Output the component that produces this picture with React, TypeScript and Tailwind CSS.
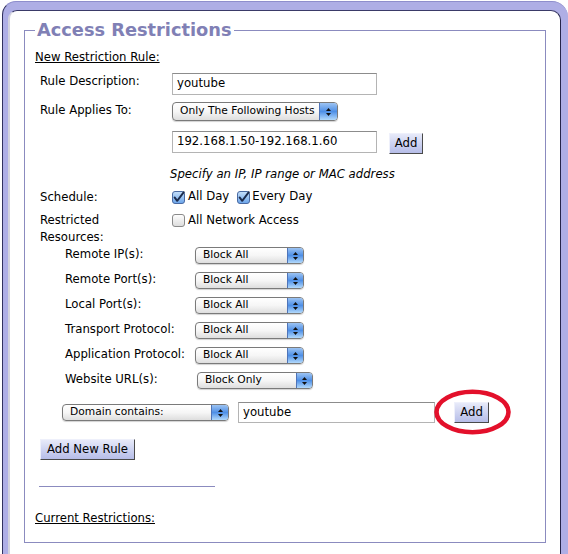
import React from "react";

function Arrows() {
  return (
    <svg width="7" height="10" viewBox="0 0 7 10">
      <polygon points="1,4 3.5,1 6,4" fill="#111" />
      <polygon points="1,6 3.5,9 6,6" fill="#111" />
    </svg>
  );
}

function AquaSelect({ text, cls, arrowCls }: { text: string; cls: string; arrowCls: string }) {
  return (
    <div
      className={`flex items-stretch rounded-[4px] border border-[#7a7a7a] bg-linear-to-b from-white via-[#f6f6f6] to-[#dedede] shadow-[0_1px_1px_rgba(0,0,0,0.18)] overflow-hidden ${cls}`}
    >
      <div className="flex-1 flex items-center pl-[7px] text-[10.7px] leading-none text-black whitespace-nowrap">{text}</div>
      <div
        className={`flex items-center justify-center border-l border-[#4f74b8] bg-linear-to-b from-[#9cc3f2] via-[#4e8fe6] to-[#b2d9fb] ${arrowCls}`}
      >
        <Arrows />
      </div>
    </div>
  );
}

function TextInput({ value, cls }: { value: string; cls: string }) {
  return (
    <div
      className={`flex items-center border border-[#b4b4b4] border-t-[#8c8c8c] bg-white pl-[4px] text-[11.7px] leading-none whitespace-nowrap ${cls}`}
    >
      {value}
    </div>
  );
}

function Btn({ text, cls }: { text: string; cls: string }) {
  return (
    <div
      className={`flex items-center justify-center border border-t-[#eef0fb] border-l-[#eef0fb] border-r-[#4a4a4a] border-b-[#4a4a4a] bg-linear-to-b from-[#e7eaf9] to-[#b6bde8] text-[11.7px] leading-none text-black whitespace-nowrap ${cls}`}
    >
      {text}
    </div>
  );
}

function Check({ checked, id }: { checked: boolean; id: string }) {
  return (
    <svg width="13" height="13" viewBox="0 0 13 13" className="shrink-0 overflow-visible">
      <defs>
        <linearGradient id={id} x1="0" y1="0" x2="0" y2="1">
          {checked ? (
            <>
              <stop offset="0" stopColor="#c6e0fa" />
              <stop offset="1" stopColor="#6aa4ea" />
            </>
          ) : (
            <>
              <stop offset="0" stopColor="#ffffff" />
              <stop offset="1" stopColor="#dcdcdc" />
            </>
          )}
        </linearGradient>
      </defs>
      <rect x="0.5" y="0.5" width="12" height="12" rx="2.5" fill={`url(#${id})`} stroke={checked ? "#4a6aa2" : "#8a8a8a"} />
      {checked && <path d="M2.6 6.4 L5.2 9.8 L11.8 1.2" fill="none" stroke="#1c2b4c" strokeWidth="1.9" strokeLinecap="round" strokeLinejoin="round" />}
    </svg>
  );
}

function SubRow({ label, children }: { label: string; children: React.ReactNode }) {
  return (
    <div className="flex items-start h-[17px] mt-[8px] first:mt-[1px]">
      <div className="w-[130px] shrink-0 mt-[-1px] leading-[16px] whitespace-nowrap">{label}</div>
      {children}
    </div>
  );
}

export default function App() {
  return (
    <div className="w-[568px] h-[554px] overflow-hidden bg-white pl-[2px] pt-[1px] font-['DejaVu_Sans',sans-serif] text-[11.7px] text-black">
      <div className="w-[566px] min-h-[600px] rounded-tl-[14px] rounded-tr-[16px] border-l border-t border-l-[#30305e] border-t-[#8e8ecc] bg-[#aeaee5] pl-[5px] pt-[8px] pr-[7px]">
        <div className="min-h-[600px] rounded-tl-[9px] rounded-tr-[10px] bg-white border-l-2 border-t border-r border-l-[#d2d2de] border-t-[#3a3a68] border-r-[#24244a] pl-[14px] pr-[14px] pt-[7px]">
          <fieldset className="border border-[#8b8bbf] pl-[10px] pb-[16px]">
            <legend className="px-[2px] text-[17.8px] leading-[24px] font-bold text-[#8080b5]">Access Restrictions</legend>

            <div className="mt-[7px] leading-[16px] underline">New Restriction Rule:</div>

            <div className="pl-[5px]">
              <div className="mt-[8px] flex items-start">
                <div className="w-[118px] mr-[14px] leading-[16px]">Rule Description:</div>
                <TextInput value="youtube" cls="w-[205px] h-[22px]" />
              </div>

              <div className="mt-[7px] flex items-start">
                <div className="w-[118px] mr-[14px] leading-[16px]">Rule Applies To:</div>
                <AquaSelect text="Only The Following Hosts" cls="w-[166px] h-[19px]" arrowCls="w-[18px]" />
              </div>

              <div className="mt-[10px] flex items-start pl-[132px]">
                <TextInput value="192.168.1.50-192.168.1.60" cls="w-[205px] h-[22px]" />
                <Btn text="Add" cls="ml-[12px] mt-[2px] w-[34px] h-[21px]" />
              </div>

              <div className="mt-[12px] pl-[130px] leading-[16px] italic">Specify an IP, IP range or MAC address</div>

              <div className="mt-[7px] flex items-center h-[16px]">
                <div className="w-[118px] mr-[14px] leading-[16px]">Schedule:</div>
                <div className="flex items-center">
                  <Check checked id="cb1" />
                  <span className="ml-[3px]">All Day</span>
                  <span className="ml-[8px] flex items-center">
                    <Check checked id="cb2" />
                    <span className="ml-[2px]">Every Day</span>
                  </span>
                </div>
              </div>

              <div className="mt-[7px] flex items-start">
                <div className="w-[118px] mr-[14px] leading-[17px]">Restricted Resources:</div>
                <div className="flex items-center h-[17px]">
                  <Check checked={false} id="cb3" />
                  <span className="ml-[3px]">All Network Access</span>
                </div>
              </div>

              <div className="pl-[25px] flex flex-col">
                <SubRow label="Remote IP(s):">
                  <AquaSelect text="Block All" cls="w-[109px] h-[17px]" arrowCls="w-[16px]" />
                </SubRow>
                <SubRow label="Remote Port(s):">
                  <AquaSelect text="Block All" cls="w-[109px] h-[17px]" arrowCls="w-[16px]" />
                </SubRow>
                <SubRow label="Local Port(s):">
                  <AquaSelect text="Block All" cls="w-[109px] h-[17px]" arrowCls="w-[16px]" />
                </SubRow>
                <SubRow label="Transport Protocol:">
                  <AquaSelect text="Block All" cls="w-[109px] h-[17px]" arrowCls="w-[16px]" />
                </SubRow>
                <SubRow label="Application Protocol:">
                  <AquaSelect text="Block All" cls="w-[109px] h-[17px]" arrowCls="w-[16px]" />
                </SubRow>
                <SubRow label="Website URL(s):">
                  <AquaSelect text="Block Only" cls="ml-[2px] w-[116px] h-[17px]" arrowCls="w-[16px]" />
                </SubRow>
              </div>
            </div>

            <div className="mt-[13px] ml-[27px] flex items-center h-[21px]">
              <AquaSelect text="Domain contains:" cls="w-[167px] h-[17px]" arrowCls="w-[17px]" />
              <TextInput value="youtube" cls="ml-[9px] w-[197px] h-[21px]" />
              <div className="relative ml-[19px]">
                <Btn text="Add" cls="w-[35px] h-[21px]" />
                <svg
                  className="absolute left-[-20px] top-[-13px] pointer-events-none overflow-visible"
                  width="77"
                  height="46"
                  viewBox="0 0 77 46"
                >
                  <ellipse cx="38.5" cy="23" rx="36" ry="20.3" fill="none" stroke="#e3102b" strokeWidth="4.6" />
                </svg>
              </div>
            </div>

            <Btn text="Add New Rule" cls="mt-[16px] ml-[5px] w-[95px] h-[21px]" />

            <div className="mt-[26px] ml-[4px] w-[176px] h-px bg-[#8b8bbf]" />

            <div className="mt-[23px] leading-[16px] underline">Current Restrictions:</div>
          </fieldset>
        </div>
      </div>
    </div>
  );
}
